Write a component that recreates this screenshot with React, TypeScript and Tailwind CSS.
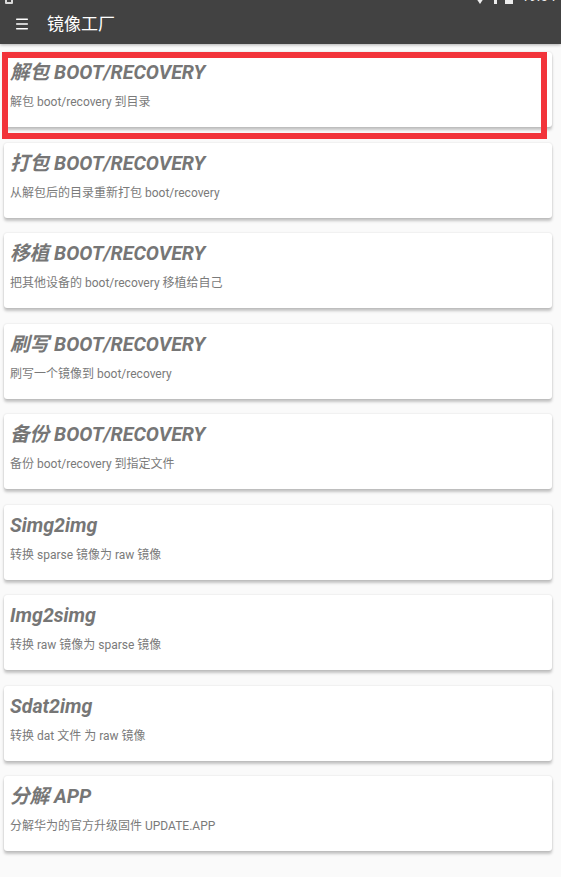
import { Menu } from 'lucide-react'

interface Tool {
    title: string
    desc: string
}

const tools: Tool[] = [
    { title: '解包 BOOT/RECOVERY', desc: '解包 boot/recovery 到目录' },
    { title: '打包 BOOT/RECOVERY', desc: '从解包后的目录重新打包 boot/recovery' },
    { title: '移植 BOOT/RECOVERY', desc: '把其他设备的 boot/recovery 移植给自己' },
    { title: '刷写 BOOT/RECOVERY', desc: '刷写一个镜像到 boot/recovery' },
    { title: '备份 BOOT/RECOVERY', desc: '备份 boot/recovery 到指定文件' },
    { title: 'Simg2img', desc: '转换 sparse 镜像为 raw 镜像' },
    { title: 'Img2simg', desc: '转换 raw 镜像为 sparse 镜像' },
    { title: 'Sdat2img', desc: '转换 dat 文件 为 raw 镜像' },
    { title: '分解 APP', desc: '分解华为的官方升级固件 UPDATE.APP' },
]

const font = { fontFamily: 'Roboto, "Noto Sans CJK SC", sans-serif' }

function StatusBar() {
    return (
        <div className="-mt-[12px] flex h-[16px] shrink-0 items-end px-[5px] text-white">
            <div className="h-[14px] w-[8px] rounded-[1px] border-2 border-white/80" />
            <div className="flex-1" />
            <div className="flex items-end gap-[8px]">
                <div className="h-0 w-0 border-x-[6px] border-t-[9px] border-x-transparent border-t-white/90" />
                <div className="h-[14px] w-[3px] bg-white/90" />
                <div className="h-[14px] w-[8px] bg-white/90" />
                <span className="text-[14px] leading-[16px] text-white/90">19:04</span>
            </div>
        </div>
    )
}

function Card({ tool }: { tool: Tool }) {
    return (
        <div className="ml-1 mr-[9px] flex h-[75px] flex-col rounded-[3px] bg-white pl-[6px] pr-[7px] pt-[7px] shadow-[0_3px_3px_rgba(0,0,0,0.22),0_0_2px_rgba(0,0,0,0.14)]">
            <div className="text-[19.6px] leading-[28px] font-bold italic text-[#767676]">{tool.title}</div>
            <div className="mt-[6px] text-[12px] leading-[18px] text-[#7a7a7a]">{tool.desc}</div>
        </div>
    )
}

export default function App() {
    return (
        <main className="relative min-h-[877px] w-[561px] overflow-hidden bg-[#fafafa]" style={font}>
            <header className="flex h-[44px] flex-col bg-[#424242] shadow-[0_1px_3px_rgba(0,0,0,0.3)]">
                <StatusBar />
                <div className="flex h-[42px] items-center gap-[17px] pl-[14px] text-white">
                    <Menu size={16} strokeWidth={2.2} />
                    <span className="text-[17px] leading-[24px]">镜像工厂</span>
                </div>
            </header>
            <div className="flex flex-col gap-[15.5px] pt-[8px]">
                {tools.map((t) => (
                    <Card key={t.title} tool={t} />
                ))}
            </div>
            <div className="pointer-events-none absolute left-[2px] top-[52px] h-[87px] w-[545px] border-[6px] border-[#f2333a]" />
        </main>
    )
}
